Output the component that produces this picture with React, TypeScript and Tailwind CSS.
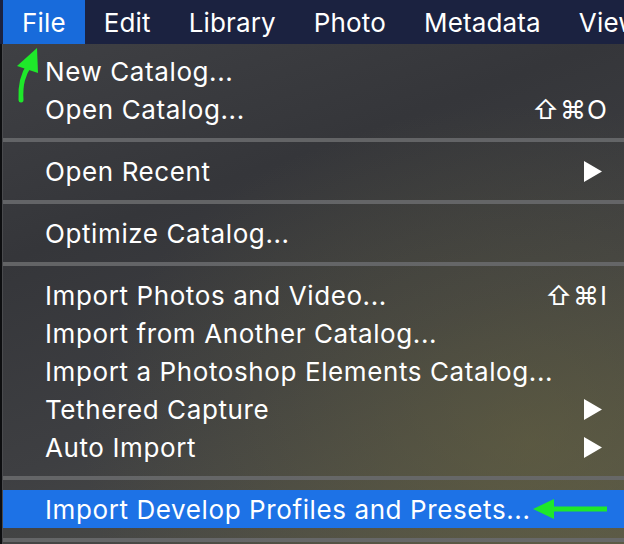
import React from 'react';

type Item =
  | { kind: 'item'; label: string; shortcut?: string; submenu?: boolean; active?: boolean; arrow?: boolean }
  | { kind: 'sep' };

const items: Item[] = [
  { kind: 'item', label: 'New Catalog...' },
  { kind: 'item', label: 'Open Catalog...', shortcut: '⇧⌘O' },
  { kind: 'sep' },
  { kind: 'item', label: 'Open Recent', submenu: true },
  { kind: 'sep' },
  { kind: 'item', label: 'Optimize Catalog...' },
  { kind: 'sep' },
  { kind: 'item', label: 'Import Photos and Video...', shortcut: '⇧⌘I' },
  { kind: 'item', label: 'Import from Another Catalog...' },
  { kind: 'item', label: 'Import a Photoshop Elements Catalog...' },
  { kind: 'item', label: 'Tethered Capture', submenu: true },
  { kind: 'item', label: 'Auto Import', submenu: true },
  { kind: 'sep' },
  { kind: 'item', label: 'Import Develop Profiles and Presets...', active: true, arrow: true },
  { kind: 'sep' },
];

const menus = ['File', 'Edit', 'Library', 'Photo', 'Metadata', 'View'];

const SubmenuTriangle = () => (
  <svg width="18" height="21" viewBox="0 0 18 21" className="mr-[22px] shrink-0">
    <path d="M0 0 L18 10.5 L0 21 Z" fill="#ffffff" />
  </svg>
);

// green annotation arrow pointing at the highlighted item
const LeftArrow = () => (
  <svg width="76" height="22" viewBox="0 0 76 22" className="ml-[3px] shrink-0">
    <path d="M20 11 H74" stroke="#1ee82a" strokeWidth="5" />
    <path d="M0 11 L21 1 L21 21 Z" fill="#1ee82a" />
  </svg>
);

const MenuRow = ({ item }: { item: Extract<Item, { kind: 'item' }> }) => (
  <div
    className={`flex h-[38px] items-center pl-[42px] ${item.active ? 'bg-[#1d72e6]' : ''}`}
  >
    <span className="whitespace-nowrap">{item.label}</span>
    {item.arrow && <LeftArrow />}
    <div className="flex-1" />
    {item.shortcut && <span className="mr-[16px] tracking-[1px] whitespace-nowrap">{item.shortcut}</span>}
    {item.submenu && <SubmenuTriangle />}
  </div>
);

export default function App() {
  return (
    <div
      className="relative w-[624px] h-[544px] overflow-hidden bg-[#111214] text-white tracking-[0.6px]"
      style={{ fontFamily: 'Inter, "Noto Sans", "DejaVu Sans", sans-serif' }}
    >
      {/* Menu bar */}
      <div className="flex h-[44px] items-stretch bg-[#1b2240] text-[26px] tracking-[0.15px]">
        {menus.map((m, i) => (
          <div
            key={m}
            className={`flex items-center whitespace-nowrap ${
              i === 0 ? 'ml-[3px] bg-[#186bdb] pl-[19px] pr-[19px]' : 'px-[19px]'
            }`}
          >
            {m}
          </div>
        ))}
      </div>

      {/* Dropdown */}
      <div className="flex h-[500px]">
        <div className="w-[2px] bg-[#0d0e10]" />
        <div className="w-[1px] bg-[#4a4b4e]" />
        <div className="relative flex-1 bg-[linear-gradient(160deg,#3f4044_0%,#35363a_30%,#3e3f42_60%,#55554a_100%)] pt-[8px] text-[26px]">
          <div className="pointer-events-none absolute inset-0 bg-[radial-gradient(ellipse_at_85%_80%,rgba(110,105,60,0.45),transparent_60%)]" />
          <div className="relative">
            {items.map((it, i) =>
              it.kind === 'sep' ? (
                <div key={i} className="py-[10px]">
                  <div className="h-[4px] bg-[#68696c]/90" />
                </div>
              ) : (
                <MenuRow key={i} item={it} />
              )
            )}
          </div>
        </div>
      </div>

      {/* green annotation arrow at File */}
      <svg className="absolute left-[11px] top-[45px]" width="36" height="60" viewBox="0 0 36 60">
        <path d="M10 55 C9 39 12 29 19 19" stroke="#1ee82a" strokeWidth="5" fill="none" strokeLinecap="round" />
        <path d="M26 3 L6 21 L27 28 Z" fill="#1ee82a" />
      </svg>
    </div>
  );
}
